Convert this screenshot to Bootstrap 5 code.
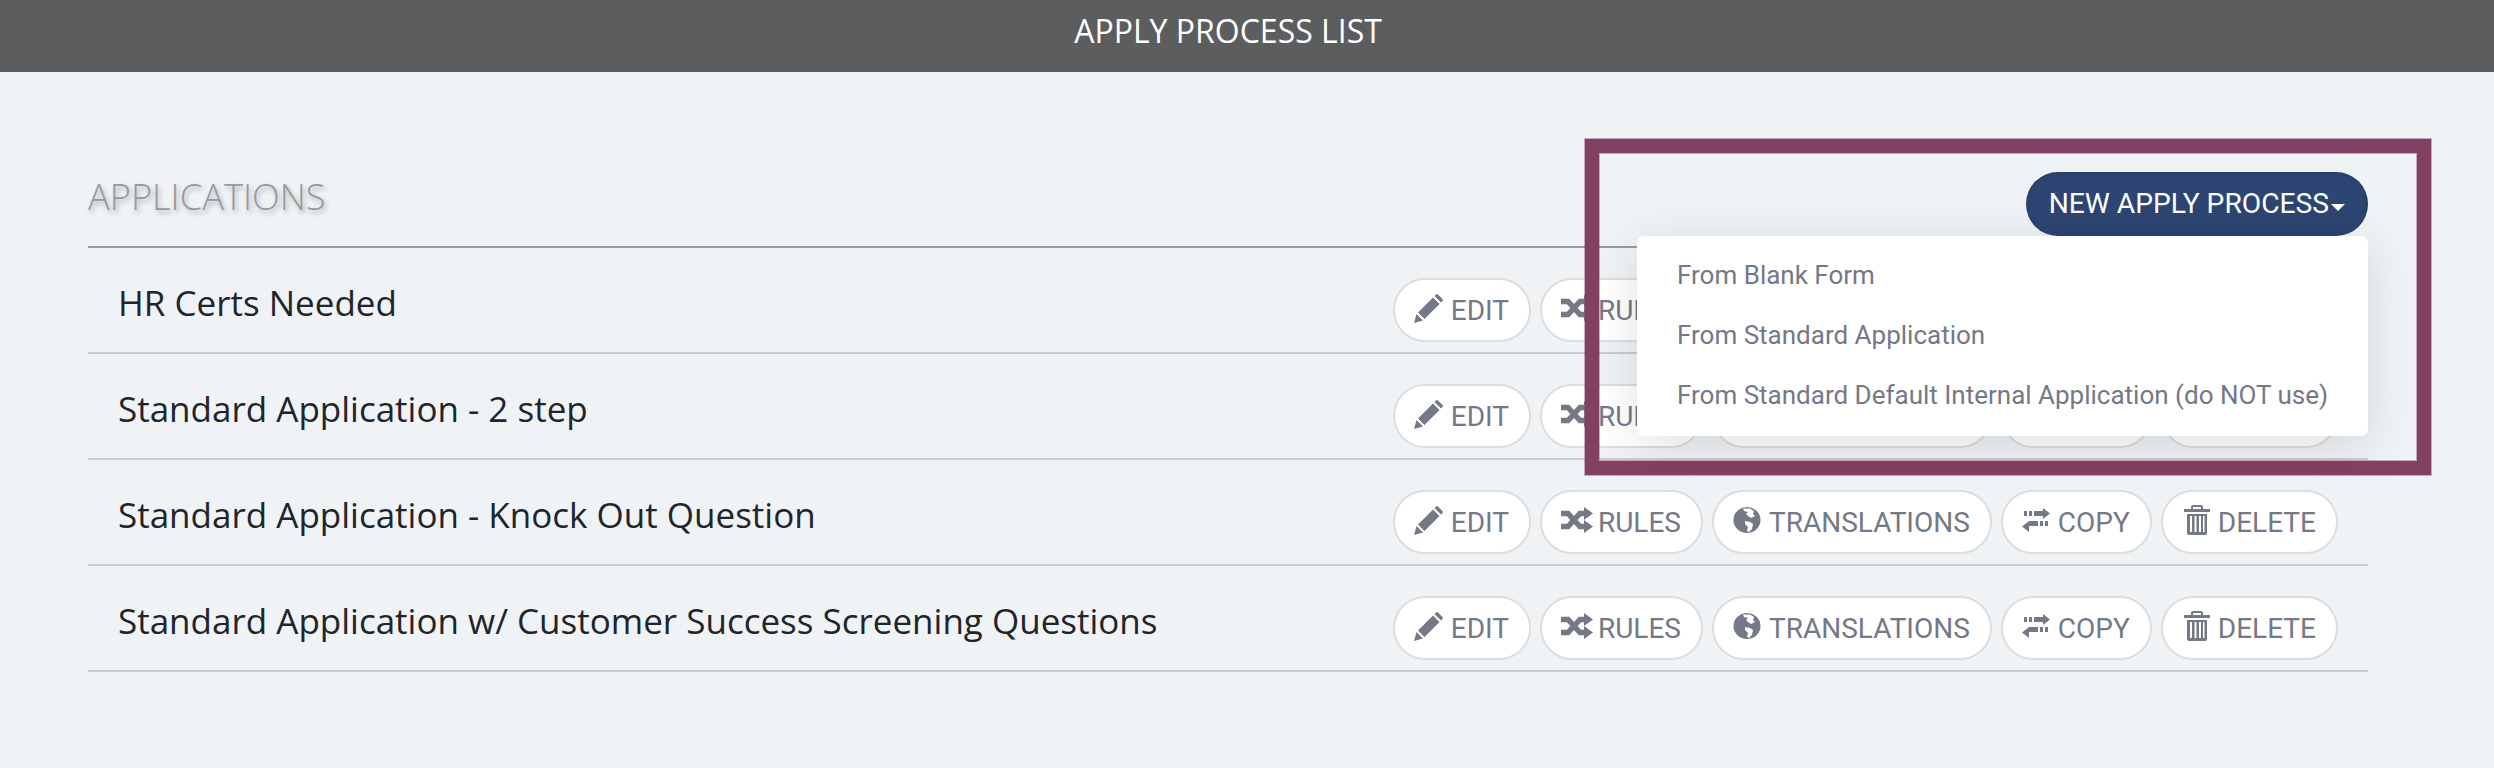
<!DOCTYPE html>
<html lang="en">
<head>
<meta charset="utf-8">
<title>Apply Process List</title>
<link href="https://cdn.jsdelivr.net/npm/bootstrap@5.3.0/dist/css/bootstrap.min.css" rel="stylesheet">
<style>
body{background:#eff3f6;font-family:"Open Sans",sans-serif;color:#212529;min-height:768px;overflow:hidden}
.page-head{background:#5c5d5f;color:#fff;height:72px;font-size:32px;font-weight:400;line-height:62px;padding-right:38px}
.apps-wrap{padding:0 126px 0 88px}
.apps-head{height:176px;border-bottom:2px solid #999}
.apps-title{font-size:36.200px;font-weight:300;color:#999;text-shadow:2px 3px 5px rgba(0,0,0,.3);margin:0 0 28px}
.new-wrap{margin-bottom:10px}
.new-btn{background:#2d4572;color:#fff;border:0;border-radius:32px;height:64px;padding:0 23px 2px 23px;font:400 28.2px Roboto,sans-serif;box-shadow:inset 0 1px 5px rgba(0,0,0,.15);display:block}
.new-btn::after{border-top-width:7.500px;border-left-width:7.500px;border-right-width:7.500px;margin-left:2px;vertical-align:2px}
.drop-panel{top:100%;right:0;left:auto;margin-top:0;width:731px;padding:10px 0;border:0;border-radius:7px;background:#fff;box-shadow:0 10px 50px rgba(0,0,0,.12)}
.drop-panel .dropdown-item{font:400 26px/59px Roboto,sans-serif;color:#757886;padding:0 40px;height:60px}
.app-row{border-bottom:2px solid #ccc;padding:30px 30px 10px 30px;height:106px}
.app-name{font-size:35px;line-height:45px;margin-top:2px}
.act-btn{display:inline-flex;align-items:center;height:64px;background:#fff;border:2px solid #ddd;border-radius:32px;padding:0 20px 0 19px;font:400 28px Roboto,sans-serif;color:#757886}
.act-btn:hover{color:#757886}
.act-btn svg{fill:currentColor;flex:none;display:block;margin-top:-4px}
.act-gap{gap:9px}
.lbl-tight{margin-left:5px}
.ico-push{margin-left:2px}
.hilite{position:absolute;left:1585px;top:139px;width:846px;height:336px;border:14px solid #834063;outline:1px solid rgba(131,64,99,.4);box-shadow:inset 0 0 0 1px rgba(131,64,99,.4);pointer-events:none}
</style>
</head>
<body>
<svg class="d-none" aria-hidden="true">
<symbol id="i-pencil" viewBox="0 0 29 29"><path d="M0 29 2.500 20 9 26.500ZM4 18.500 19 3.500 25.500 10 10.500 25ZM20.500 2 22 .5a1.500 1.500 0 0 1 2 0L28.500 5a1.500 1.500 0 0 1 0 2L27 8.500Z"/></symbol>
<symbol id="i-shuffle" viewBox="0 0 32 26"><path d="M23 0l9 6.500-9 6.500ZM23 13l9 6.500-9 6.500Z"/><path d="M0 6.500h7l12 13h5M0 19.500h7l12-13h5" fill="none" stroke="currentColor" stroke-width="5.500"/></symbol>
<symbol id="i-globe" viewBox="0 0 28 26"><path fill-rule="evenodd" d="M14 0a13.500 13 0 1 1 0 26 13.500 13 0 0 1 0-26ZM10 1.500 17 1.500 21 4 20 7 22 9 18 11 15 9 13 7 15 5 11 4ZM12 14 17 15 20 17 19 22 16 25 14 24 15 20 12 17Z"/></symbol>
<symbol id="i-copy" viewBox="0 0 28 24"><path d="M2 3h3v5H2ZM7 3h3v5H7ZM12 3h9V0l7 5.500-7 5.500V8h-9ZM7 13h9v5H7V24L0 18.500 7 13ZM18 13h3v5h-3ZM23 13h3v5h-3Z"/></symbol>
<symbol id="i-trash" viewBox="0 0 26 30"><path fill-rule="evenodd" d="M9 0h8a2 2 0 0 1 2 2v2h7v3H0V4h7V2a2 2 0 0 1 2-2Zm0 2v2h8V2ZM3 9h20v19a2 2 0 0 1-2 2H5a2 2 0 0 1-2-2ZM6 11v16h2V11Zm4.500 0v16h2V11Zm4.500 0v16h2V11Zm4 0v16h1.500V11Z"/></symbol>
</svg>

<header class="page-head text-center">APPLY PROCESS LIST</header>

<main class="apps-wrap">
  <div class="apps-head d-flex justify-content-between align-items-end">
    <h2 class="apps-title">APPLICATIONS</h2>
    <div class="dropdown new-wrap">
      <button class="btn new-btn dropdown-toggle" type="button">NEW APPLY PROCESS</button>
      <ul class="dropdown-menu show drop-panel">
        <li><a class="dropdown-item" href="#">From Blank Form</a></li>
        <li><a class="dropdown-item" href="#">From Standard Application</a></li>
        <li><a class="dropdown-item" href="#">From Standard Default Internal Application (do NOT use)</a></li>
      </ul>
    </div>
  </div>

  <div class="app-row d-flex justify-content-between align-items-start">
    <div class="app-name">HR Certs Needed</div>
    <div class="d-flex act-gap">
      <a class="act-btn text-decoration-none"><svg width="29" height="29"><use href="#i-pencil"/></svg><span class="ms-2">EDIT</span></a>
      <a class="act-btn text-decoration-none"><svg width="32" height="26"><use href="#i-shuffle"/></svg><span class="lbl-tight">RULES</span></a>
      <a class="act-btn text-decoration-none"><svg width="28" height="26"><use href="#i-globe"/></svg><span class="ms-2">TRANSLATIONS</span></a>
      <a class="act-btn text-decoration-none"><svg width="28" height="24"><use href="#i-copy"/></svg><span class="ms-2">COPY</span></a>
      <a class="act-btn text-decoration-none"><svg class="ico-push" width="26" height="30"><use href="#i-trash"/></svg><span class="ms-2">DELETE</span></a>
    </div>
  </div>
  <div class="app-row d-flex justify-content-between align-items-start">
    <div class="app-name">Standard Application - 2 step</div>
    <div class="d-flex act-gap">
      <a class="act-btn text-decoration-none"><svg width="29" height="29"><use href="#i-pencil"/></svg><span class="ms-2">EDIT</span></a>
      <a class="act-btn text-decoration-none"><svg width="32" height="26"><use href="#i-shuffle"/></svg><span class="lbl-tight">RULES</span></a>
      <a class="act-btn text-decoration-none"><svg width="28" height="26"><use href="#i-globe"/></svg><span class="ms-2">TRANSLATIONS</span></a>
      <a class="act-btn text-decoration-none"><svg width="28" height="24"><use href="#i-copy"/></svg><span class="ms-2">COPY</span></a>
      <a class="act-btn text-decoration-none"><svg class="ico-push" width="26" height="30"><use href="#i-trash"/></svg><span class="ms-2">DELETE</span></a>
    </div>
  </div>
  <div class="app-row d-flex justify-content-between align-items-start">
    <div class="app-name">Standard Application - Knock Out Question</div>
    <div class="d-flex act-gap">
      <a class="act-btn text-decoration-none"><svg width="29" height="29"><use href="#i-pencil"/></svg><span class="ms-2">EDIT</span></a>
      <a class="act-btn text-decoration-none"><svg width="32" height="26"><use href="#i-shuffle"/></svg><span class="lbl-tight">RULES</span></a>
      <a class="act-btn text-decoration-none"><svg width="28" height="26"><use href="#i-globe"/></svg><span class="ms-2">TRANSLATIONS</span></a>
      <a class="act-btn text-decoration-none"><svg width="28" height="24"><use href="#i-copy"/></svg><span class="ms-2">COPY</span></a>
      <a class="act-btn text-decoration-none"><svg class="ico-push" width="26" height="30"><use href="#i-trash"/></svg><span class="ms-2">DELETE</span></a>
    </div>
  </div>
  <div class="app-row d-flex justify-content-between align-items-start">
    <div class="app-name">Standard Application w/ Customer Success Screening Questions</div>
    <div class="d-flex act-gap">
      <a class="act-btn text-decoration-none"><svg width="29" height="29"><use href="#i-pencil"/></svg><span class="ms-2">EDIT</span></a>
      <a class="act-btn text-decoration-none"><svg width="32" height="26"><use href="#i-shuffle"/></svg><span class="lbl-tight">RULES</span></a>
      <a class="act-btn text-decoration-none"><svg width="28" height="26"><use href="#i-globe"/></svg><span class="ms-2">TRANSLATIONS</span></a>
      <a class="act-btn text-decoration-none"><svg width="28" height="24"><use href="#i-copy"/></svg><span class="ms-2">COPY</span></a>
      <a class="act-btn text-decoration-none"><svg class="ico-push" width="26" height="30"><use href="#i-trash"/></svg><span class="ms-2">DELETE</span></a>
    </div>
  </div>
</main>
<div class="hilite"></div>
<script src="https://cdn.jsdelivr.net/npm/bootstrap@5.3.0/dist/js/bootstrap.bundle.min.js"></script>
</body>
</html>
